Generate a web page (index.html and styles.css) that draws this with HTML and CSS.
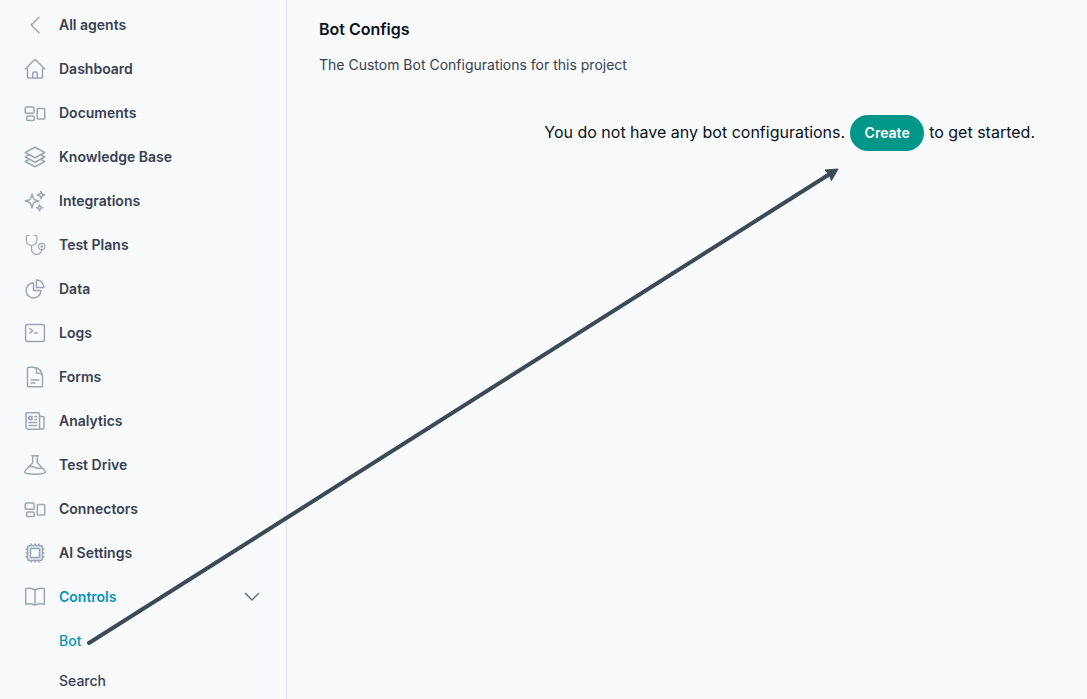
FILE: index.html
```
<!DOCTYPE html>
<html lang="en">
<head>
<meta charset="utf-8">
<meta name="viewport" content="width=device-width, initial-scale=1">
<title>Bot Configs</title>
<link rel="stylesheet" href="styles.css">
</head>
<body>
<div class="app">
  <nav class="sidebar" aria-label="Project">
    <a class="nav-item" href="#"><svg class="icon" viewBox="0 0 24 24"><path d="M16 4.2 8.2 12l7.8 7.8"/></svg><span>All agents</span></a>
    <a class="nav-item" href="#"><svg class="icon" viewBox="0 0 24 24"><path d="m2.25 12 8.954-8.955a1.126 1.126 0 0 1 1.591 0L21.75 12M4.5 9.75v10.125c0 .621.504 1.125 1.125 1.125h12.75c.621 0 1.125-.504 1.125-1.125V9.75M9.75 21v-4.875c0-.621.504-1.125 1.125-1.125h2.25c.621 0 1.125.504 1.125 1.125V21"/></svg><span>Dashboard</span></a>
    <a class="nav-item" href="#"><svg class="icon" viewBox="0 0 24 24"><rect x="2.25" y="6" width="8.75" height="6.25" rx="1.1"/><rect x="14.25" y="7.5" width="7.5" height="10.5" rx="1.1"/><rect x="3.75" y="15" width="7.5" height="4.5" rx="1.1"/></svg><span>Documents</span></a>
    <a class="nav-item" href="#"><svg class="icon" viewBox="0 0 24 24"><path d="M6.429 9.75 2.25 12l4.179 2.25m0-4.5 5.571 3 5.571-3m-11.142 0L2.25 7.5 12 2.25l9.75 5.25-4.179 2.25m0 0L21.75 12l-4.179 2.25m0 0 4.179 2.25L12 21.75 2.25 16.5l4.179-2.25m11.142 0-5.571 3-5.571-3"/></svg><span>Knowledge Base</span></a>
    <a class="nav-item" href="#"><svg class="icon" viewBox="0 0 24 24"><path d="M9.813 15.904 9 18.75l-.813-2.846a4.5 4.5 0 0 0-3.09-3.09L2.25 12l2.846-.813a4.5 4.5 0 0 0 3.09-3.09L9 5.25l.813 2.846a4.5 4.5 0 0 0 3.09 3.09L15.75 12l-2.846.813a4.5 4.5 0 0 0-3.09 3.09ZM18.259 8.715 18 9.75l-.259-1.035a3.375 3.375 0 0 0-2.455-2.456L14.25 6l1.036-.259a3.375 3.375 0 0 0 2.455-2.456L18 2.25l.259 1.035a3.375 3.375 0 0 0 2.456 2.456L21.75 6l-1.035.259a3.375 3.375 0 0 0-2.456 2.456ZM16.894 20.567 16.5 21.75l-.394-1.183a2.25 2.25 0 0 0-1.423-1.423L13.5 18.75l1.183-.394a2.25 2.25 0 0 0 1.423-1.423l.394-1.183.394 1.183a2.25 2.25 0 0 0 1.423 1.423l1.183.394-1.183.394a2.25 2.25 0 0 0-1.423 1.423Z"/></svg><span>Integrations</span></a>
    <a class="nav-item" href="#"><svg class="icon icon-fine" viewBox="0 0 24 24"><path d="M6 2.500H4.300q-1 0-1 1v3.700a5.300 5.300 0 0 0 10.600 0V3.500q0-1-1-1h-1.700M8.600 12.500v3.900a5.050 5.050 0 0 0 10.100 0"/><circle cx="18.700" cy="13.500" r="3.200"/><circle cx="18.700" cy="13.500" r=".7"/></svg><span>Test Plans</span></a>
    <a class="nav-item" href="#"><svg class="icon" viewBox="0 0 24 24"><path d="M10.500 6a7.500 7.500 0 1 0 7.500 7.500h-7.500V6Z"/><path d="M13.500 10.500H21A7.500 7.500 0 0 0 13.500 3v7.500Z"/></svg><span>Data</span></a>
    <a class="nav-item" href="#"><svg class="icon" viewBox="0 0 24 24"><path d="m6.750 7.500 3 2.250-3 2.250m4.500 0h3"/><rect x="2.600" y="3.500" width="18.800" height="17" rx="2"/></svg><span>Logs</span></a>
    <a class="nav-item" href="#"><svg class="icon" viewBox="0 0 24 24"><path d="M19.500 14.250v-2.625a3.375 3.375 0 0 0-3.375-3.375h-1.500A1.125 1.125 0 0 1 13.500 7.125v-1.500a3.375 3.375 0 0 0-3.375-3.375H8.250m0 12.750h7.500m-7.500 3H12M10.500 2.250H5.625c-.621 0-1.125.504-1.125 1.125v17.250c0 .621.504 1.125 1.125 1.125h12.750c.621 0 1.125-.504 1.125-1.125V11.250a9 9 0 0 0-9-9Z"/></svg><span>Forms</span></a>
    <a class="nav-item" href="#"><svg class="icon" viewBox="0 0 24 24"><path d="M12 7.500h1.500m-1.500 3h1.500m-7.500 3h7.500m-7.500 3h7.500m3-9h3.375c.621 0 1.125.504 1.125 1.125V18a2.250 2.250 0 0 1-2.250 2.250M16.500 7.500V18a2.250 2.250 0 0 0 2.250 2.250M16.500 7.500V4.875c0-.621-.504-1.125-1.125-1.125H4.125C3.504 3.750 3 4.254 3 4.875V18a2.250 2.250 0 0 0 2.250 2.250h13.500M6 7.500h3v3H6v-3Z"/></svg><span>Analytics</span></a>
    <a class="nav-item" href="#"><svg class="icon" viewBox="0 0 24 24"><path d="M8.700 2.700h6.600M9.700 2.700v7L2.300 17.600c-.9 1.100-.5 2.400.8 2.700q8.900 1.700 17.800 0c1.300-.3 1.700-1.600.8-2.700L14.300 9.700v-7M5.800 14c2.600-1 4.400-.5 6.500.5 2 .9 3.800 1.100 6.100.5"/></svg><span>Test Drive</span></a>
    <a class="nav-item" href="#"><svg class="icon" viewBox="0 0 24 24"><rect x="2.250" y="6" width="8.750" height="6.250" rx="1.100"/><rect x="14.250" y="7.500" width="7.500" height="10.500" rx="1.100"/><rect x="3.750" y="15" width="7.500" height="4.500" rx="1.100"/></svg><span>Connectors</span></a>
    <a class="nav-item" href="#"><svg class="icon" viewBox="0 0 24 24"><path d="M8.250 3v1.500M4.500 8.250H3m18 0h-1.500M4.500 12H3m18 0h-1.500m-15 3.750H3m18 0h-1.500M8.250 19.500V21M12 3v1.500m0 15V21m3.750-18v1.500m0 15V21"/><rect class="chip" x="4.500" y="4.500" width="15" height="15" rx="2.250"/><rect class="chip-core" x="7.500" y="7.500" width="9" height="9"/></svg><span>AI Settings</span></a>
    <a class="nav-item active" href="#" aria-expanded="true"><svg class="icon" viewBox="0 0 24 24"><path d="M12 5c-2.800-1.700-6-2-9.300-1.200v15.400c3.300-.7 6.500-.4 9.300 1 2.800-1.400 6-1.700 9.300-1V3.800C18 3 14.800 3.300 12 5Zm0 0v15.200"/></svg><span>Controls</span><svg class="chevron" viewBox="0 0 20 20"><path d="m3.500 6.500 6.500 6.500 6.500-6.500"/></svg></a>
    <div class="subnav">
      <a class="sub-item active" href="#" aria-current="page">Bot</a>
      <a class="sub-item" href="#">Search</a>
    </div>
  </nav>
  <main class="content">
    <h1 class="title">Bot Configs</h1>
    <p class="description">The Custom Bot Configurations for this project</p>
    <div class="empty-state">
      <span>You do not have any bot configurations.</span>
      <button class="create" type="button">Create</button>
      <span>to get started.</span>
    </div>
  </main>
  <svg class="pointer" viewBox="0 0 760 486" aria-hidden="true">
    <path class="pointer-line" d="M6 480 746 11.500"/>
    <path class="pointer-head" d="M755 6 742 7 746 11.500 748.500 17.500Z"/>
  </svg>
</div>
</body>
</html>
```
FILE: styles.css
```
* {
  box-sizing: border-box;
}

body {
  margin: 0;
  background: #f9fafc;
  color: #0b1120;
  font-family: Inter, "Liberation Sans", sans-serif;
}

.app {
  position: relative;
  display: flex;
  height: 100vh;
  overflow: hidden;
}

.sidebar {
  flex: 0 0 287px;
  padding-top: 3px;
  border-right: 1px solid #dfe3ea;
}

.nav-item,
.sub-item {
  display: flex;
  align-items: center;
  color: #374151;
  font-size: 14px;
  line-height: 20px;
  text-decoration: none;
}

.nav-item {
  height: 44px;
  padding: 0 24px 0 23px;
  gap: 12px;
  font-weight: 600;
}

.subnav {
  padding: 2px 0 0 59px;
}

.sub-item {
  height: 40px;
  font-weight: 500;
}

.nav-item.active,
.sub-item.active {
  color: #0694b8;
}

.icon,
.chevron {
  flex: none;
  fill: none;
  stroke: #9ca6b6;
  stroke-width: 1.5;
  stroke-linecap: round;
  stroke-linejoin: round;
}

.icon {
  width: 24px;
  height: 24px;
}

.icon-fine {
  stroke-width: 1.2;
}

.chip {
  fill: #e3e8ef;
}

.chip-core {
  fill: #f9fafc;
}

.chevron {
  width: 20px;
  height: 20px;
  margin-left: auto;
  stroke: #6b7280;
}

.content {
  flex: 1;
  padding: 17px 52px 0 32px;
}

.title {
  margin: 0;
  font-size: 16px;
  font-weight: 600;
  line-height: 24px;
}

.description {
  margin: 14px 0 0;
  color: #374151;
  font-size: 14px;
  line-height: 20px;
}

.empty-state {
  display: flex;
  align-items: baseline;
  justify-content: flex-end;
  gap: 5px;
  margin-top: 40px;
  font-size: 16px;
  line-height: 24px;
  white-space: nowrap;
}

.create {
  min-width: 74px;
  height: 36px;
  padding: 0 14px;
  border: 0;
  border-radius: 18px;
  background: #009688;
  color: #fff;
  font: 600 14px/20px Inter, "Liberation Sans", sans-serif;
}

.pointer {
  position: absolute;
  top: 163px;
  left: 83px;
  width: 760px;
  height: 486px;
  pointer-events: none;
}

.pointer-line {
  fill: none;
  stroke: #3c4a55;
  stroke-width: 4;
  stroke-linecap: round;
}

.pointer-head {
  fill: #3c4a55;
  stroke: #3c4a55;
}
```
